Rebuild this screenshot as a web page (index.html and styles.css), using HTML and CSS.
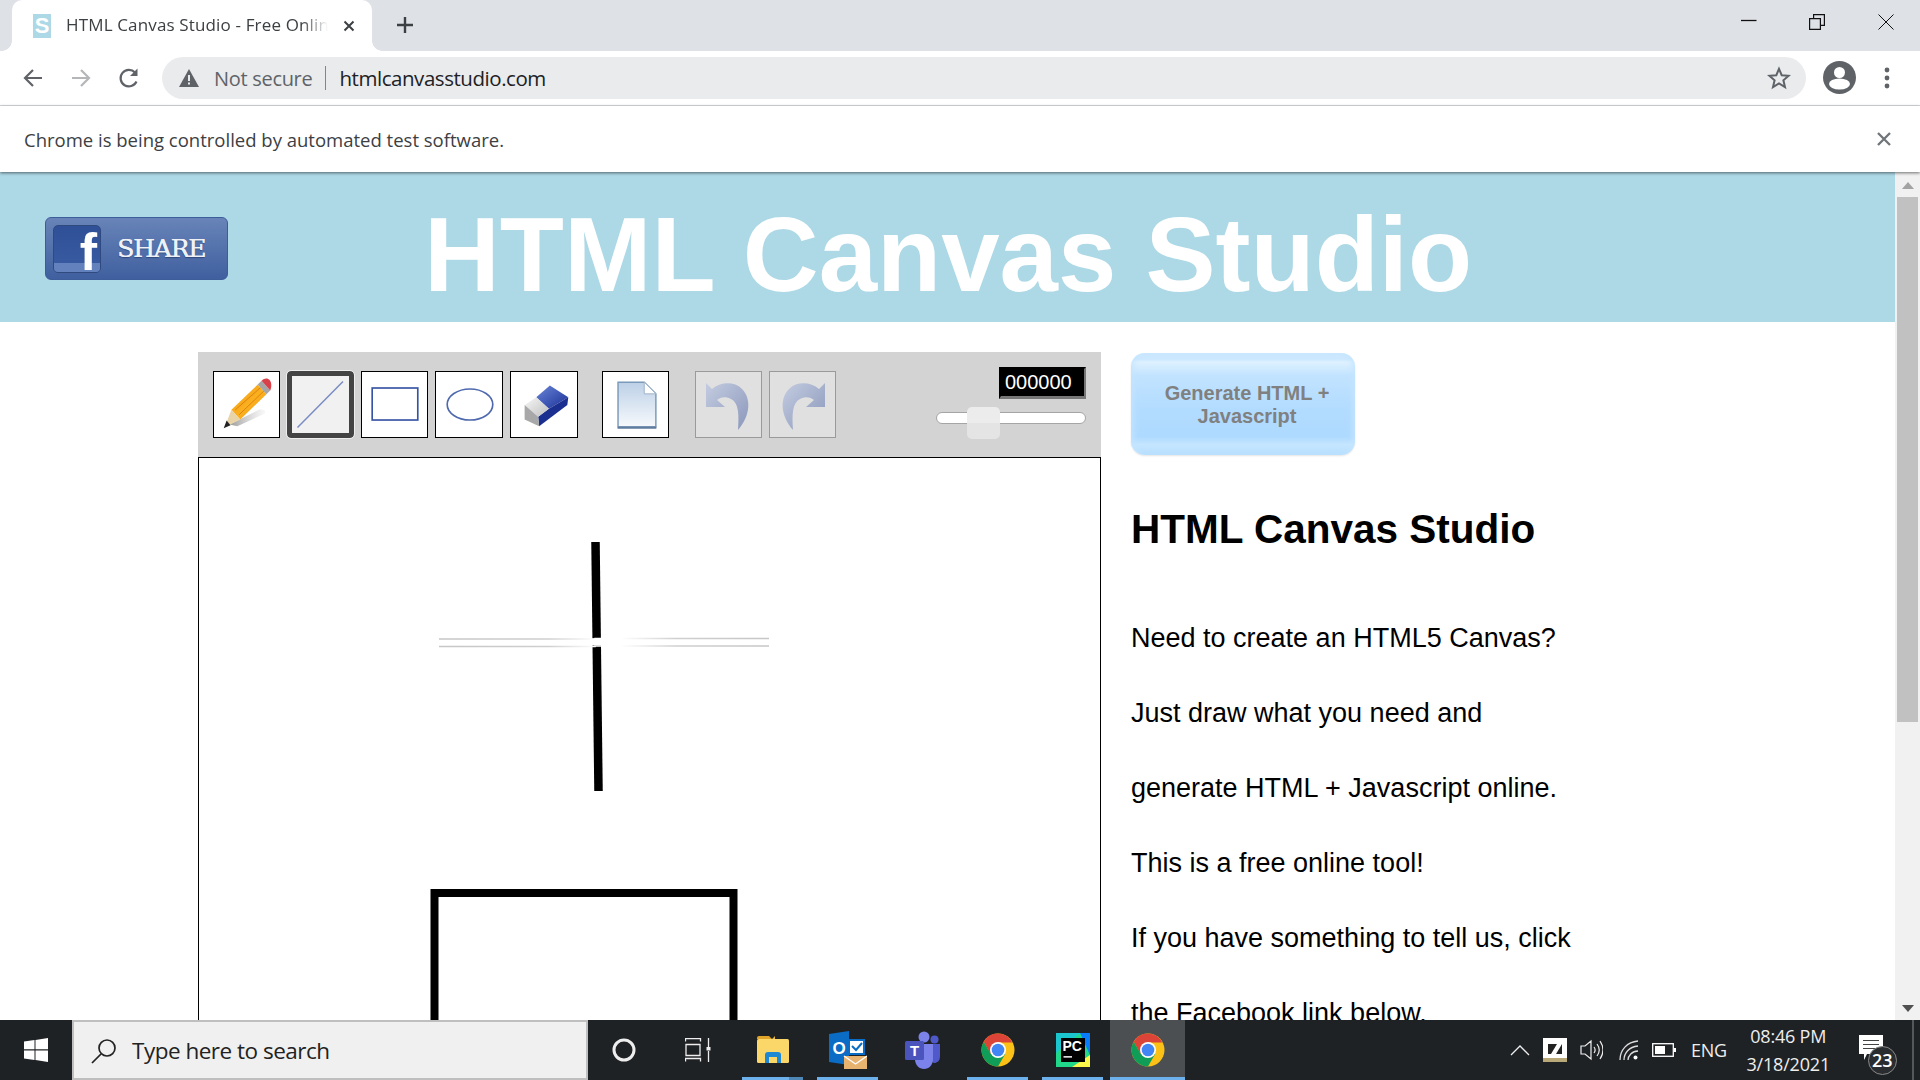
FILE: index.html
```html
<!DOCTYPE html>
<html lang="en">
<head>
<meta charset="utf-8">
<title>HTML Canvas Studio</title>
<link rel="stylesheet" href="styles.css">
</head>
<body>
<div class="tabstrip">
  <div class="tab">
    <span class="favicon">S</span>
    <span class="tab-title">HTML Canvas Studio - Free Onlin</span>
    <svg class="tab-close" width="12" height="12" viewBox="0 0 12 12"><path d="M1.500 1.500l9 9M10.500 1.500l-9 9" stroke="#3c4043" stroke-width="2" fill="none"/></svg>
  </div>
  <svg class="new-tab" width="18" height="18" viewBox="0 0 18 18"><path d="M9 1v16M1 9h16" stroke="#3c4043" stroke-width="2.400" fill="none"/></svg>
  <div class="win-controls">
    <span class="win-btn"><svg width="16" height="16" viewBox="0 0 16 16"><path d="M0 6.500h15.500" stroke="#111" stroke-width="1.300" fill="none"/></svg></span>
    <span class="win-btn"><svg width="16" height="16" viewBox="0 0 16 16"><path d="M.6 4.600h10.800v10.800H.6zM4.600 4.600V.6h10.800v10.800h-4" stroke="#111" stroke-width="1.200" fill="none"/></svg></span>
    <span class="win-btn"><svg width="16" height="16" viewBox="0 0 16 16"><path d="M.5.5l15 15M15.500.5l-15 15" stroke="#111" stroke-width="1" fill="none"/></svg></span>
  </div>
</div>

<div class="toolbar">
  <svg class="nav first" width="24" height="24" viewBox="0 0 24 24"><path d="M21 12H4.500M12 4l-8 8 8 8" stroke="#5f6368" stroke-width="2.200" fill="none"/></svg>
  <svg class="nav" width="24" height="24" viewBox="0 0 24 24"><path d="M3 12h16.500M12 4l8 8-8 8" stroke="#b4b6b9" stroke-width="2.200" fill="none"/></svg>
  <svg class="nav" width="24" height="24" viewBox="0 0 24 24"><path d="M19.500 15.500A8.300 8.300 0 1 1 18 6.500" stroke="#5f6368" stroke-width="2.200" fill="none"/><path d="M20.500 2.500v7.500h-7.500z" fill="#5f6368"/></svg>
  <div class="omnibox">
    <svg class="warn" width="20" height="18" viewBox="0 0 20 18"><path d="M10 0l10 18H0z" fill="#5f6368"/><path d="M9 6h2v6H9zM9 13.500h2v2H9z" fill="#e9ebed"/></svg>
    <span class="not-secure">Not secure</span>
    <span class="omni-divider"></span>
    <span class="url">htmlcanvasstudio.com</span>
    <svg class="star" width="24" height="24" viewBox="0 0 24 24"><path d="M12 2.800l2.700 6.400 6.900.6-5.200 4.500 1.600 6.800-6-3.600-6 3.600 1.600-6.800L2.400 9.800l6.900-.6z" stroke="#5f6368" stroke-width="2" fill="none"/></svg>
  </div>
  <svg class="avatar" width="33" height="33" viewBox="0 0 33 33"><circle cx="16.500" cy="16.500" r="16.500" fill="#5f6368"/><circle cx="16.500" cy="11.500" r="5.500" fill="#fff"/><ellipse cx="16.500" cy="23" rx="10.500" ry="5.500" fill="#fff"/></svg>
  <svg class="dots" width="6" height="22" viewBox="0 0 6 22"><circle cx="3" cy="3" r="2.400" fill="#5f6368"/><circle cx="3" cy="11" r="2.400" fill="#5f6368"/><circle cx="3" cy="19" r="2.400" fill="#5f6368"/></svg>
</div>

<div class="infobar">
  <span class="info-text">Chrome is being controlled by automated test software.</span>
  <svg class="info-close" width="14" height="14" viewBox="0 0 14 14"><path d="M1 1l12 12M13 1L1 13" stroke="#70757a" stroke-width="2.300" fill="none"/></svg>
</div>

<div class="viewport">
  <div class="page">
    <header class="banner">
      <a class="fb-share">
        <span class="fb-square"><span class="fb-strip"></span><span class="fb-f">f</span></span>
        <span class="fb-label">SHARE</span>
      </a>
      <h1 class="site-title">HTML Canvas Studio</h1>
    </header>
    <main class="main">
      <section class="editor">
        <div class="panel">
          <div class="tools">
            <span class="tool">
              <svg width="65" height="65" viewBox="0 0 67 67">
                <defs><linearGradient id="pb" x1="0" y1="0" x2="1" y2="1"><stop offset="0" stop-color="#f09a18"/><stop offset=".55" stop-color="#fbb11f"/><stop offset="1" stop-color="#e98a10"/></linearGradient><linearGradient id="ps" x1="0" x2="1"><stop offset="0" stop-color="#777" stop-opacity=".75"/><stop offset="1" stop-color="#bbb" stop-opacity=".1"/></linearGradient></defs>
                <path d="M16 54L46 39c6-1 8 1 6 4L24 56z" fill="url(#ps)"/>
                <path d="M18 39L45 13l9 10-27 26z" fill="url(#pb)"/>
                <path d="M22 39L48 16M26 44l26-25" stroke="#d9820d" stroke-width="1" fill="none"/>
                <path d="M45 13l4-4 9 10-4 4z" fill="#a6a6a6"/>
                <path d="M49 9c3-3 6-3 8-1s3 6 1 11z" fill="#d8404a"/>
                <path d="M18 39l9 10-16 8z" fill="#e9d3a8"/>
                <path d="M13 50l4 5-7 3z" fill="#222"/>
              </svg>
            </span>
            <span class="tool active">
              <svg width="61" height="61" viewBox="0 0 61 61"><path d="M7.500 53.500L53 7.500" stroke="#7a8cc4" stroke-width="1.500" fill="none"/></svg>
            </span>
            <span class="tool">
              <svg width="65" height="65" viewBox="0 0 67 67"><rect x="10.500" y="16.500" width="47" height="33" fill="none" stroke="#3753a4" stroke-width="1.700"/></svg>
            </span>
            <span class="tool wide">
              <svg width="65" height="65" viewBox="0 0 67 67"><ellipse cx="34" cy="33.500" rx="23.500" ry="16" fill="none" stroke="#4f69ae" stroke-width="1.700"/></svg>
            </span>
            <span class="tool wide">
              <svg width="65" height="65" viewBox="0 0 67 67">
                <defs><linearGradient id="eb" x1="0" y1="0" x2="1" y2="1"><stop offset="0" stop-color="#6a86d8"/><stop offset="1" stop-color="#1a2f96"/></linearGradient><linearGradient id="ew" x1="0" y1="0" x2="1" y2="1"><stop offset="0" stop-color="#f7f7f7"/><stop offset="1" stop-color="#c0c0c0"/></linearGradient></defs>
                <path d="M25 26L39 14l19 12-20 12z" fill="url(#eb)"/>
                <path d="M38 38l20-12-1 8-29 22-1-10z" fill="#1b2f90"/>
                <path d="M13 34l12-8 13 12-11 8z" fill="url(#ew)"/>
                <path d="M13 34l14 12 1 10-15-7z" fill="#a8a8a8"/>
              </svg>
            </span>
            <span class="tool new-doc">
              <svg width="65" height="65" viewBox="0 0 67 67">
                <defs><linearGradient id="pg" x1="0" y1="0" x2="0" y2="1"><stop offset="0" stop-color="#bcd0e6"/><stop offset="1" stop-color="#f6f9fd"/></linearGradient></defs>
                <path d="M15.500 10.500h27l12 12v34h-39z" fill="url(#pg)" stroke="#7b99b8" stroke-width="1.500"/>
                <path d="M42.500 10.500v12h12z" fill="#fff" stroke="#9db2c9"/>
                <path d="M15 57.500h40" stroke="#5f7d9c" stroke-width="2"/>
              </svg>
            </span>
            <span class="tool disabled undo">
              <svg width="57" height="57" viewBox="0 0 57 57">
                <defs><linearGradient id="ua" x1="0" y1="0" x2="1" y2="1"><stop offset="0" stop-color="#c3cce0"/><stop offset="1" stop-color="#8b97bb"/></linearGradient></defs>
                <path d="M6 7l6 6C20 6 34 5 42 13c9 9 9 26-4 41 1-15 1-27-7-31-5-3-11-2-14 1l8 7H6z" fill="url(#ua)"/>
              </svg>
            </span>
            <span class="tool disabled redo">
              <svg width="57" height="57" viewBox="0 0 57 57">
                <path d="M51 7l-6 6C37 6 23 5 15 13 6 22 6 39 19 54c-1-15-1-27 7-31 5-3 11-2 14 1l-8 7h19z" fill="url(#ua)"/>
              </svg>
            </span>
          </div>
          <div class="picker">
            <span class="color-value">000000</span>
            <span class="slider"><span class="slider-thumb"></span></span>
          </div>
        </div>
        <div class="canvas">
          <svg class="drawing" width="901" height="600" viewBox="0 0 901 600">
            <defs>
              <linearGradient id="fade" gradientUnits="userSpaceOnUse" x1="240" y1="0" x2="570" y2="0">
                <stop offset="0" stop-color="#c6c6c6"/>
                <stop offset=".33" stop-color="#cfcfcf"/>
                <stop offset=".48" stop-color="#ffffff"/>
                <stop offset=".55" stop-color="#ffffff"/>
                <stop offset=".72" stop-color="#cfcfcf"/>
                <stop offset="1" stop-color="#c6c6c6"/>
              </linearGradient>
            </defs>
            <path d="M396.500 84L399.500 333" stroke="#000" stroke-width="8.500" fill="none"/>
            <path d="M240 184.500L570 183.500" stroke="#fff" stroke-width="7" fill="none"/>
            <path d="M240 181H396V180.500H570M240 188.500H396V188H570" stroke="url(#fade)" stroke-width="1.500" fill="none"/>
            <path d="M235.500 580V435H534.500V580" stroke="#000" stroke-width="8" fill="none"/>
          </svg>
        </div>
      </section>
      <aside class="side">
        <button class="generate">Generate HTML +<br>Javascript</button>
        <h2 class="side-title">HTML Canvas Studio</h2>
        <p class="side-line">Need to create an HTML5 Canvas?</p>
        <p class="side-line">Just draw what you need and</p>
        <p class="side-line">generate HTML + Javascript online.</p>
        <p class="side-line">This is a free online tool!</p>
        <p class="side-line">If you have something to tell us, click</p>
        <p class="side-line">the Facebook link below.</p>
      </aside>
    </main>
  </div>
  <div class="scrollbar">
    <svg class="scroll-arrow up" width="12" height="7" viewBox="0 0 12 7"><path d="M6 0l6 7H0z" fill="#a3a3a3"/></svg>
    <div class="scroll-thumb"></div>
    <svg class="scroll-arrow down" width="12" height="7" viewBox="0 0 12 7"><path d="M6 7l6-7H0z" fill="#505050"/></svg>
  </div>
</div>

<footer class="taskbar">
  <div class="start">
    <svg width="24" height="24" viewBox="0 0 24 24"><path d="M0 3.500l10.500-1.500v9.300H0zM11.500 1.900L24 0v11.300H11.500zM0 12.500h10.500v9.500L0 20.500zM11.500 12.500H24V24l-12.500-1.900z" fill="#fff"/></svg>
  </div>
  <div class="search">
    <svg width="26" height="26" viewBox="0 0 26 26"><circle cx="16" cy="10" r="8" fill="none" stroke="#222" stroke-width="1.700"/><path d="M10 16L1 25" stroke="#222" stroke-width="1.700" fill="none"/></svg>
    <span class="search-text">Type here to search</span>
  </div>
  <div class="slot cortana"><svg width="24" height="24" viewBox="0 0 24 24"><circle cx="12" cy="12" r="10" fill="none" stroke="#eee" stroke-width="3"/></svg></div>
  <div class="slot taskview"><svg width="26" height="24" viewBox="0 0 26 24"><path d="M.5 3.500V.5h15v3M.5 23.500v-3h15v3M1 6.500h14v11H1zM23.500 0v9M23.500 13v11" stroke="#eee" stroke-width="1.300" fill="none"/><rect x="21.500" y="9" width="4" height="3.500" fill="#eee"/></svg></div>
  <div class="app open stacked">
    <svg width="34" height="28" viewBox="0 0 34 28"><path d="M1 2a2 2 0 0 1 2-2h10l3 3h-15z" fill="#e0a428"/><rect x="1" y="3" width="32" height="24" rx="1.500" fill="#fbd669"/><path d="M1 3h15l3-3v3" fill="#eab63b"/><path d="M9 27v-8a3 3 0 0 1 3-3h10a3 3 0 0 1 3 3v8h-4v-6h-8v6z" fill="#1e88d2"/></svg>
  </div>
  <div class="app open">
    <svg width="38" height="38" viewBox="0 0 38 38"><path d="M0 3l20-3v34L0 31z" fill="#0a6cc4"/><rect x="20" y="9" width="15" height="14" fill="#fff" stroke="#0a6cc4" stroke-width="2"/><path d="M23 15l4 4 6-7" stroke="#0a6cc4" stroke-width="2" fill="none"/><text x="10" y="23" text-anchor="middle" class="svg-o">O</text><rect x="15" y="25" width="23" height="13" fill="#e8b36e"/><path d="M15 25l11.500 8L38 25" stroke="#fff" stroke-width="1.300" fill="none"/></svg>
  </div>
  <div class="app">
    <svg width="36" height="38" viewBox="0 0 36 38"><circle cx="19" cy="6" r="5.500" fill="#7b83eb"/><circle cx="29.500" cy="8.500" r="4" fill="#5059c9"/><path d="M25 13h10v12c0 5-3 7-6 7l-4-2z" fill="#5059c9"/><path d="M10 13h18v15c0 6-4 10-9 10s-9-4-9-10z" fill="#7b83eb"/><rect x="0" y="10" width="19" height="19" rx="1.500" fill="#4b53bc"/><text x="9.500" y="25" text-anchor="middle" class="svg-t">T</text></svg>
  </div>
  <div class="app open">
    <svg width="34" height="34" viewBox="0 0 34 34"><use href="#chrome-mark"/></svg>
  </div>
  <div class="app open">
    <svg width="34" height="34" viewBox="0 0 34 34"><rect width="34" height="34" fill="#21d789"/><path d="M0 0h24L0 20z" fill="#1cc6cf"/><path d="M24 0h10v22z" fill="#087cfa"/><path d="M34 22v12H16z" fill="#fcf84a"/><rect x="5" y="5" width="24" height="24" fill="#000"/><text x="6.500" y="18" class="svg-pc">PC</text><rect x="7.500" y="23" width="8.500" height="1.700" fill="#ddd"/></svg>
  </div>
  <div class="app open active-app">
    <svg width="34" height="34" viewBox="0 0 34 34">
      <defs>
        <g id="chrome-mark">
          <circle cx="17" cy="17" r="16.500" fill="#fbc116"/>
          <path d="M17 .5A16.500 16.500 0 0 0 2.700 8.750L9.850 21.130 17 9.500h14.300A16.500 16.500 0 0 0 17 .5z" fill="#db4437"/>
          <path d="M2.700 8.750A16.500 16.500 0 0 0 17 33.500l7.150-12.380-14.300 0z" fill="#0f9d58"/>
          <circle cx="17" cy="17" r="8" fill="#fff"/>
          <circle cx="17" cy="17" r="6.300" fill="#4285f4"/>
        </g>
      </defs>
      <use href="#chrome-mark"/>
    </svg>
  </div>
  <div class="tray">
    <svg class="tray-chevron" width="20" height="11" viewBox="0 0 20 11"><path d="M1 10l9-9 9 9" stroke="#eee" stroke-width="1.300" fill="none"/></svg>
    <svg class="tray-pen" width="24" height="24" viewBox="0 0 24 24"><rect width="24" height="20" fill="#fff"/><rect y="20" width="24" height="4" fill="#b9a878"/><rect x="5" y="6" width="14" height="10" fill="#222"/><path d="M8 16l6-10h5l-6 10z" fill="#fff"/></svg>
    <svg class="tray-sound" width="23" height="24" viewBox="0 0 23 24"><path d="M1 8h4l6-5v18l-6-5H1zM14 9c1.500 2 1.500 4 0 6M17 6c3 4 3 8 0 12M20 3c4 6 4 12 0 18" stroke="#eee" stroke-width="1.200" fill="none"/></svg>
    <svg class="tray-wifi" width="20" height="20" viewBox="0 0 20 20"><path d="M1 20C1 10 8 2 19 1M5 20c0-7 5-13 14-14M9 20c0-4 4-9 10-9" stroke="#ddd" stroke-width="1.300" fill="none"/><circle cx="16.500" cy="17.500" r="2" fill="#fff"/></svg>
    <svg class="tray-battery" width="24" height="14" viewBox="0 0 24 14"><rect x=".7" y=".7" width="20.600" height="12.600" fill="none" stroke="#fff" stroke-width="1.300"/><rect x="3" y="3" width="10" height="8" fill="#fff"/><rect x="22" y="5" width="2" height="4" fill="#fff"/></svg>
    <span class="tray-lang">ENG</span>
    <span class="clock"><span>08:46 PM</span><span>3/18/2021</span></span>
    <span class="notify">
      <svg width="24" height="26" viewBox="0 0 24 26"><path d="M0 0h24v19H8l-3 6v-6H0z" fill="#fff"/><path d="M4 5.500h16M4 9.500h16M4 13.500h16" stroke="#444" stroke-width="1.200"/></svg>
      <span class="notify-count">23</span>
    </span>
    <span class="tray-edge"></span>
  </div>
</footer>
</body>
</html>
```
FILE: styles.css
```css
* { box-sizing: border-box; }
html, body { margin: 0; height: 100%; }
body {
  width: 1920px;
  height: 1080px;
  overflow: hidden;
  display: flex;
  flex-direction: column;
  font-family: "Open Sans", "Noto Sans", sans-serif;
  background: #fff;
}
svg { display: block; flex: none; }

/* Browser tab strip */
.tabstrip {
  height: 51px;
  flex: none;
  display: flex;
  align-items: flex-end;
  background: #dee1e6;
}
.tab {
  position: relative;
  width: 360px;
  height: 51px;
  margin-left: 12px;
  padding-left: 21px;
  display: flex;
  align-items: center;
  background: #fff;
  border-radius: 10px 10px 0 0;
}
.tab::before, .tab::after {
  content: "";
  position: absolute;
  bottom: 0;
  width: 10px;
  height: 10px;
}
.tab::before { left: -10px; background: radial-gradient(circle at 0 0, #dee1e6 9.500px, #fff 10px); }
.tab::after { right: -10px; background: radial-gradient(circle at 100% 0, #dee1e6 9.500px, #fff 10px); }
.favicon {
  width: 18px;
  height: 24px;
  flex: none;
  background: #add8e6;
  color: #fff;
  font: bold 22px/24px "Liberation Sans", sans-serif;
  text-align: center;
}
.tab-title {
  width: 262px;
  margin: 0 0 2px 15px;
  font-size: 17px;
  color: #3c4043;
  white-space: nowrap;
  letter-spacing: .15px;
  -webkit-mask-image: linear-gradient(90deg, #000 90%, transparent);
  mask-image: linear-gradient(90deg, #000 90%, transparent);
}
.tab-close { margin-left: 15px; }
.new-tab { margin: 0 0 17px 24px; }
.win-controls { margin-left: auto; align-self: stretch; display: flex; }
.win-btn { width: 68.500px; display: flex; justify-content: center; padding-top: 14px; }

/* Browser toolbar */
.toolbar {
  height: 55px;
  flex: none;
  display: flex;
  align-items: center;
  border-bottom: 1px solid #dadce0;
  padding-bottom: 1px;
  background: #fff;
}
.nav { margin-left: 24px; }
.nav.first { margin-left: 21px; }
.omnibox {
  width: 1644px;
  height: 42px;
  margin-left: 21px;
  padding: 0 15px 0 17px;
  display: flex;
  align-items: center;
  background: #e9ebed;
  border-radius: 21px;
}
.not-secure { margin: 1px 0 0 15px; font-size: 20px; color: #5f6368; letter-spacing: -.3px; }
.omni-divider { width: 1px; height: 24px; margin-left: 13px; background: #80868b; }
.url { margin-left: 13px; font-size: 20.500px; color: #202124; letter-spacing: -.45px; }
.star { margin-left: auto; }
.avatar { margin-left: 16.500px; }
.dots { margin-left: 28.500px; }

/* Automation info bar */
.infobar {
  position: relative;
  z-index: 2;
  height: 66px;
  flex: none;
  display: flex;
  align-items: center;
  padding: 0 29px 0 24px;
  background: #fff;
  box-shadow: 0 1px 3px rgba(0, 0, 0, .55);
}
.info-text { font-size: 18.500px; color: #3c4043; letter-spacing: 0; }
.info-close { margin-left: auto; }

/* Page viewport */
.viewport { flex: 1; min-height: 0; display: flex; overflow: hidden; }
.page { flex: 1; min-width: 0; overflow: hidden; font-family: "Liberation Sans", Arial, sans-serif; }
.banner {
  height: 150px;
  display: flex;
  align-items: flex-start;
  background: #add8e6;
}
.fb-share {
  width: 183px;
  height: 63px;
  margin: 45px 0 0 45px;
  padding: 7px;
  flex: none;
  display: flex;
  align-items: center;
  background: linear-gradient(#6884b8, #3f5f9f);
  border: 1px solid #3d5c9a;
  border-radius: 6px;
}
.fb-square {
  position: relative;
  width: 48px;
  height: 48px;
  flex: none;
  background: linear-gradient(#2f5097, #3a5ca2);
  border: 1px solid #30497f;
  border-radius: 5px;
}
.fb-strip {
  position: absolute;
  left: 0;
  right: 0;
  bottom: 0;
  height: 9px;
  background: #6281bd;
  border-radius: 0 0 4px 4px;
}
.fb-f {
  position: absolute;
  right: 3px;
  top: 3px;
  font: bold 52px/46px "Liberation Sans", sans-serif;
  color: #fff;
}
.fb-label {
  margin-left: 16px;
  font: 25px "DejaVu Serif", serif;
  letter-spacing: -1.200px;
  color: #eef1f6;
  text-shadow: .5px 0 0 #eef1f6, 0 1px 1px rgba(30, 50, 90, .6);
}
.site-title {
  margin: 23px 0 0 196px;
  font-size: 105px;
  line-height: 120px;
  font-weight: bold;
  color: #fff;
  white-space: nowrap;
}
.main { display: flex; padding: 30px 0 0 198px; }
.editor { width: 903px; flex: none; }
.panel {
  height: 105px;
  padding: 15px 15px 0;
  display: flex;
  align-items: flex-start;
  background: #d3d3d3;
}
.tools { display: flex; gap: 7px; margin-top: 4px; }
.tool {
  width: 67px;
  height: 67px;
  flex: none;
  display: flex;
  align-items: center;
  justify-content: center;
  background: #fff;
  border: 1px solid #000;
}
.tool.wide { width: 68px; }
.tool.active {
  background: #f1f1f1;
  border: 5px solid #444;
  outline: 1px solid #eee;
  border-radius: 4px;
}
.tool.new-doc { margin-left: 17px; }
.tool.disabled { background: #e0e0e0; border-color: #9a9a9a; }
.tool.undo { margin-left: 19px; }
.picker { margin-left: auto; width: 150px; display: flex; flex-direction: column; align-items: flex-end; }
.color-value {
  width: 87px;
  height: 32px;
  padding-left: 4px;
  background: #000;
  border: 2px solid;
  border-color: #000 #777 #777 #000;
  border-bottom-width: 3px;
  color: #fff;
  font-size: 20px;
  line-height: 26px;
}
.slider {
  position: relative;
  width: 150px;
  height: 12px;
  margin-top: 13px;
  background: #fff;
  border: 1px solid #a5a5a5;
  border-radius: 6px;
}
.slider-thumb {
  position: absolute;
  left: 30px;
  top: -6px;
  width: 33px;
  height: 32px;
  background: linear-gradient(#ececec 50%, #e4e4e4 50%);
  border-radius: 5px;
}
.canvas { height: 620px; border: 1px solid #000; border-bottom: 0; background: #fff; overflow: hidden; }
.side { margin-left: 30px; width: 480px; }
.generate {
  width: 224px;
  height: 102px;
  margin-top: 1px;
  padding: 1px 0 0 8px;
  display: block;
  font: bold 20px/23px "Liberation Sans", sans-serif;
  color: #808080;
  border: 0;
  border-radius: 14px;
  background: linear-gradient(#cbe8ff 0, #cbe8ff 6%, #def1ff 9%, #c2e3ff 22%, #b2dcff 55%, #aedaff 82%, #c6e6ff 90%, #b5deff 100%);
  box-shadow: inset 5px 0 6px -3px #c4e5ff, inset -5px 0 6px -3px #c4e5ff, 0 1px 2px #e4e4e4;
}
.side-title { margin: 49px 0 47px; font-size: 40.500px; line-height: 50px; font-weight: bold; color: #000; }
.side-line { margin: 0; height: 75px; font-size: 27px; line-height: 75px; color: #000; white-space: nowrap; }
.scrollbar { width: 25px; flex: none; display: flex; flex-direction: column; align-items: center; background: #f1f1f1; }
.scroll-arrow.up { margin-top: 10px; }
.scroll-thumb { width: 21px; height: 525px; margin-top: 8px; background: #c1c1c1; }
.scroll-arrow.down { margin-top: auto; margin-bottom: 8px; }

/* Windows taskbar */
.taskbar {
  height: 60px;
  flex: none;
  display: flex;
  align-items: stretch;
  background: #1f2225;
  color: #eee;
}
.start { width: 72px; display: flex; align-items: center; justify-content: center; }
.search {
  width: 516px;
  padding: 1px 0 0 17px;
  display: flex;
  align-items: center;
  background: #f0f0f0;
  border: 2px solid #bfbfbf;
}
.search-text { margin-left: 15px; font-size: 22.500px; color: #222; letter-spacing: -.5px; }
.slot { display: flex; align-items: center; justify-content: center; }
.cortana { width: 72px; }
.taskview { width: 75px; }
.app { position: relative; width: 75px; display: flex; align-items: center; justify-content: center; }
.app.open::after {
  content: "";
  position: absolute;
  left: 7px;
  right: 7px;
  bottom: 0;
  height: 3px;
  background: #6db1ec;
}
.app.stacked::before {
  content: "";
  position: absolute;
  right: 7px;
  bottom: 0;
  width: 14px;
  height: 3px;
  z-index: 1;
  background: #4f87b6;
}
.app.active-app { background: #4c4f52; }
.app.active-app::after { left: 0; right: 0; }
.svg-o { font: bold 17px "Liberation Sans", sans-serif; fill: #fff; }
.svg-t { font: bold 15px "Liberation Sans", sans-serif; fill: #fff; }
.svg-pc { font: bold 14px "Liberation Sans", sans-serif; fill: #fff; }
.tray { margin-left: auto; width: 410px; display: flex; align-items: center; }
.tray-pen { margin-left: 13px; }
.tray-sound { margin-left: 13px; }
.tray-wifi { margin-left: 16px; }
.tray-battery { margin-left: 13px; }
.tray-lang { margin-left: 15px; font-size: 18px; letter-spacing: -.3px; }
.clock {
  margin-left: 20px;
  width: 83px;
  display: flex;
  flex-direction: column;
  align-items: center;
  gap: 4px;
  font-size: 18px;
  line-height: 24px;
  letter-spacing: -.2px;
  white-space: nowrap;
}
.notify { position: relative; margin-left: 29px; margin-bottom: 4px; }
.notify-count {
  position: absolute;
  left: 9px;
  top: 11px;
  width: 29px;
  height: 29px;
  border-radius: 50%;
  background: #2a2d30;
  border: 1px solid #888;
  text-align: center;
  font-size: 18px;
  font-weight: 600;
  line-height: 26px;
  color: #fff;
}
.tray-edge { margin-left: auto; margin-right: 6px; width: 2px; align-self: stretch; background: #55585b; }
```
